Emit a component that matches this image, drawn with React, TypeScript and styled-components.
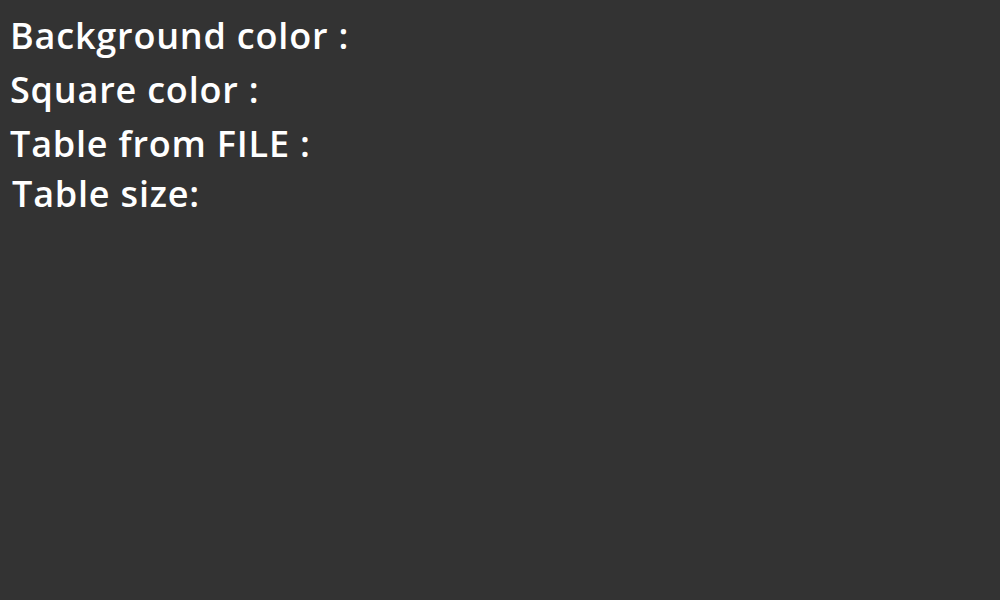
import React from "react";
import styled, { createGlobalStyle } from "styled-components";

const Global = createGlobalStyle`
  html, body { margin: 0; padding: 0; background: #333333; }
  body { font-family: "Open Sans", "Noto Sans", sans-serif; color: #ffffff; }
`;

const Page = styled.div`
  min-height: 600px;
  padding: 14px 10px;
  display: flex;
  flex-direction: column;
  box-sizing: border-box;
`;

const Row = styled.div<{ $indent?: number; $height?: number }>`
  font-size: 36px;
  font-weight: 600;
  letter-spacing: 0.8px;
  height: ${(p) => p.$height ?? 54}px;
  line-height: 44px;
  padding-left: ${(p) => p.$indent ?? 0}px;
  white-space: nowrap;
`;

export default function App() {
  return (
    <>
      <Global />
      <Page>
        <Row>Background color :</Row>
        <Row>Square color :</Row>
        <Row $height={50}>Table from FILE :</Row>
        <Row $indent={2}>Table size:</Row>
      </Page>
    </>
  );
}
